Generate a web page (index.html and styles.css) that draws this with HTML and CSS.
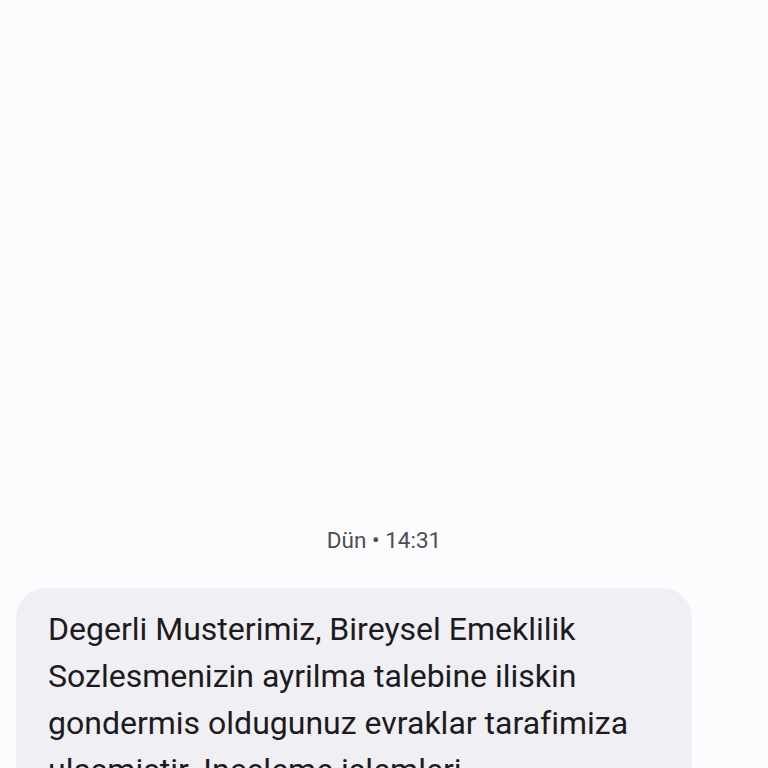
FILE: index.html
```html
<!DOCTYPE html>
<html lang="tr">
<head>
<meta charset="utf-8">
<title>Mesaj</title>
<link rel="stylesheet" href="styles.css">
</head>
<body>
<main class="thread">
  <div class="timestamp">Dün • 14:31</div>
  <div class="bubble">
    <p class="message">Degerli Musterimiz, Bireysel Emeklilik Sozlesmenizin ayrilma talebine iliskin gondermis oldugunuz evraklar tarafimiza ulasmistir. Inceleme islemleri tamamlandiginda tarafiniza bilgi verilecektir.</p>
  </div>
</main>
</body>
</html>
```
FILE: styles.css
```css
html, body {
  margin: 0;
  padding: 0;
  background: #fcfbfe;
  height: 100%;
  overflow: hidden;
}
.thread {
  display: flex;
  flex-direction: column;
  align-items: flex-start;
  padding: 526px 0 0 16px;
  font-family: Roboto, "Noto Sans", sans-serif;
}
.timestamp {
  align-self: stretch;
  margin-right: 16px;
  text-align: center;
  font-size: 22.5px;
  line-height: 28px;
  color: #4f4e55;
}
.bubble {
  margin-top: 34px;
  width: 676px;
  box-sizing: border-box;
  background: #f0eff4;
  border-radius: 30px;
  padding: 18px 32px 20px 32px;
}
.message {
  margin: 0;
  font-size: 32px;
  line-height: 47px;
  color: #1c1b20;
}
```
